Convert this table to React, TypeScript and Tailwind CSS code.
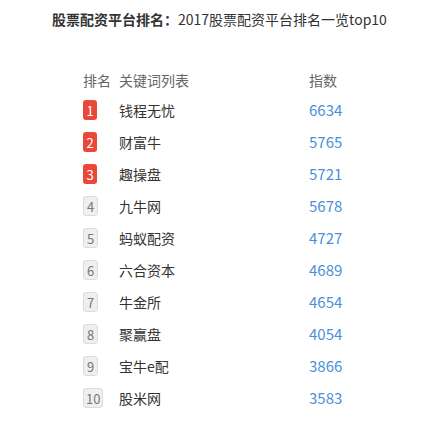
const rows = [
  { name: "钱程无忧", value: 6634 },
  { name: "财富牛", value: 5765 },
  { name: "趣操盘", value: 5721 },
  { name: "九牛网", value: 5678 },
  { name: "蚂蚁配资", value: 4727 },
  { name: "六合资本", value: 4689 },
  { name: "牛金所", value: 4654 },
  { name: "聚赢盘", value: 4054 },
  { name: "宝牛e配", value: 3866 },
  { name: "股米网", value: 3583 },
];

export default function App() {
  return (
    <div
      className="w-[437px] h-[424px] bg-white text-[#333]"
      style={{ fontFamily: '"Noto Sans CJK SC", "Noto Sans", sans-serif' }}
    >
      <h1 className="pt-[9px] pl-[52px] text-[14px] leading-5 text-[#333] whitespace-nowrap">
        <span className="font-bold">股票配资平台排名：</span>
        <span className="font-normal">2017股票配资平台排名一览top10</span>
      </h1>

      <div className="mt-[37px] pl-[83px]">
        <div className="flex items-center h-[28px] text-[14px] text-[#666]">
          <span className="w-[36px]">排名</span>
          <span className="w-[190px]">关键词列表</span>
          <span>指数</span>
        </div>
        {rows.map((row, i) => (
          <div key={row.name} className="flex items-center h-[32px] text-[14px]">
            <div className="w-[36px]">
              {i < 3 ? (
                <span className="inline-flex items-center justify-center min-w-[14px] h-[20px] px-[1px] rounded-[3px] bg-[#e9473a] text-white text-[13px] leading-none">
                  {i + 1}
                </span>
              ) : (
                <span className="inline-flex items-center justify-center min-w-[15px] h-[20px] px-[2px] rounded-[3px] bg-[#efefef] border border-[#dcdcdc] text-[#777] text-[13px] leading-none">
                  {i + 1}
                </span>
              )}
            </div>
            <span className="w-[190px] text-[#333]">{row.name}</span>
            <span className="text-[15px] text-[#4a8fd8]">{row.value}</span>
          </div>
        ))}
      </div>
    </div>
  );
}
